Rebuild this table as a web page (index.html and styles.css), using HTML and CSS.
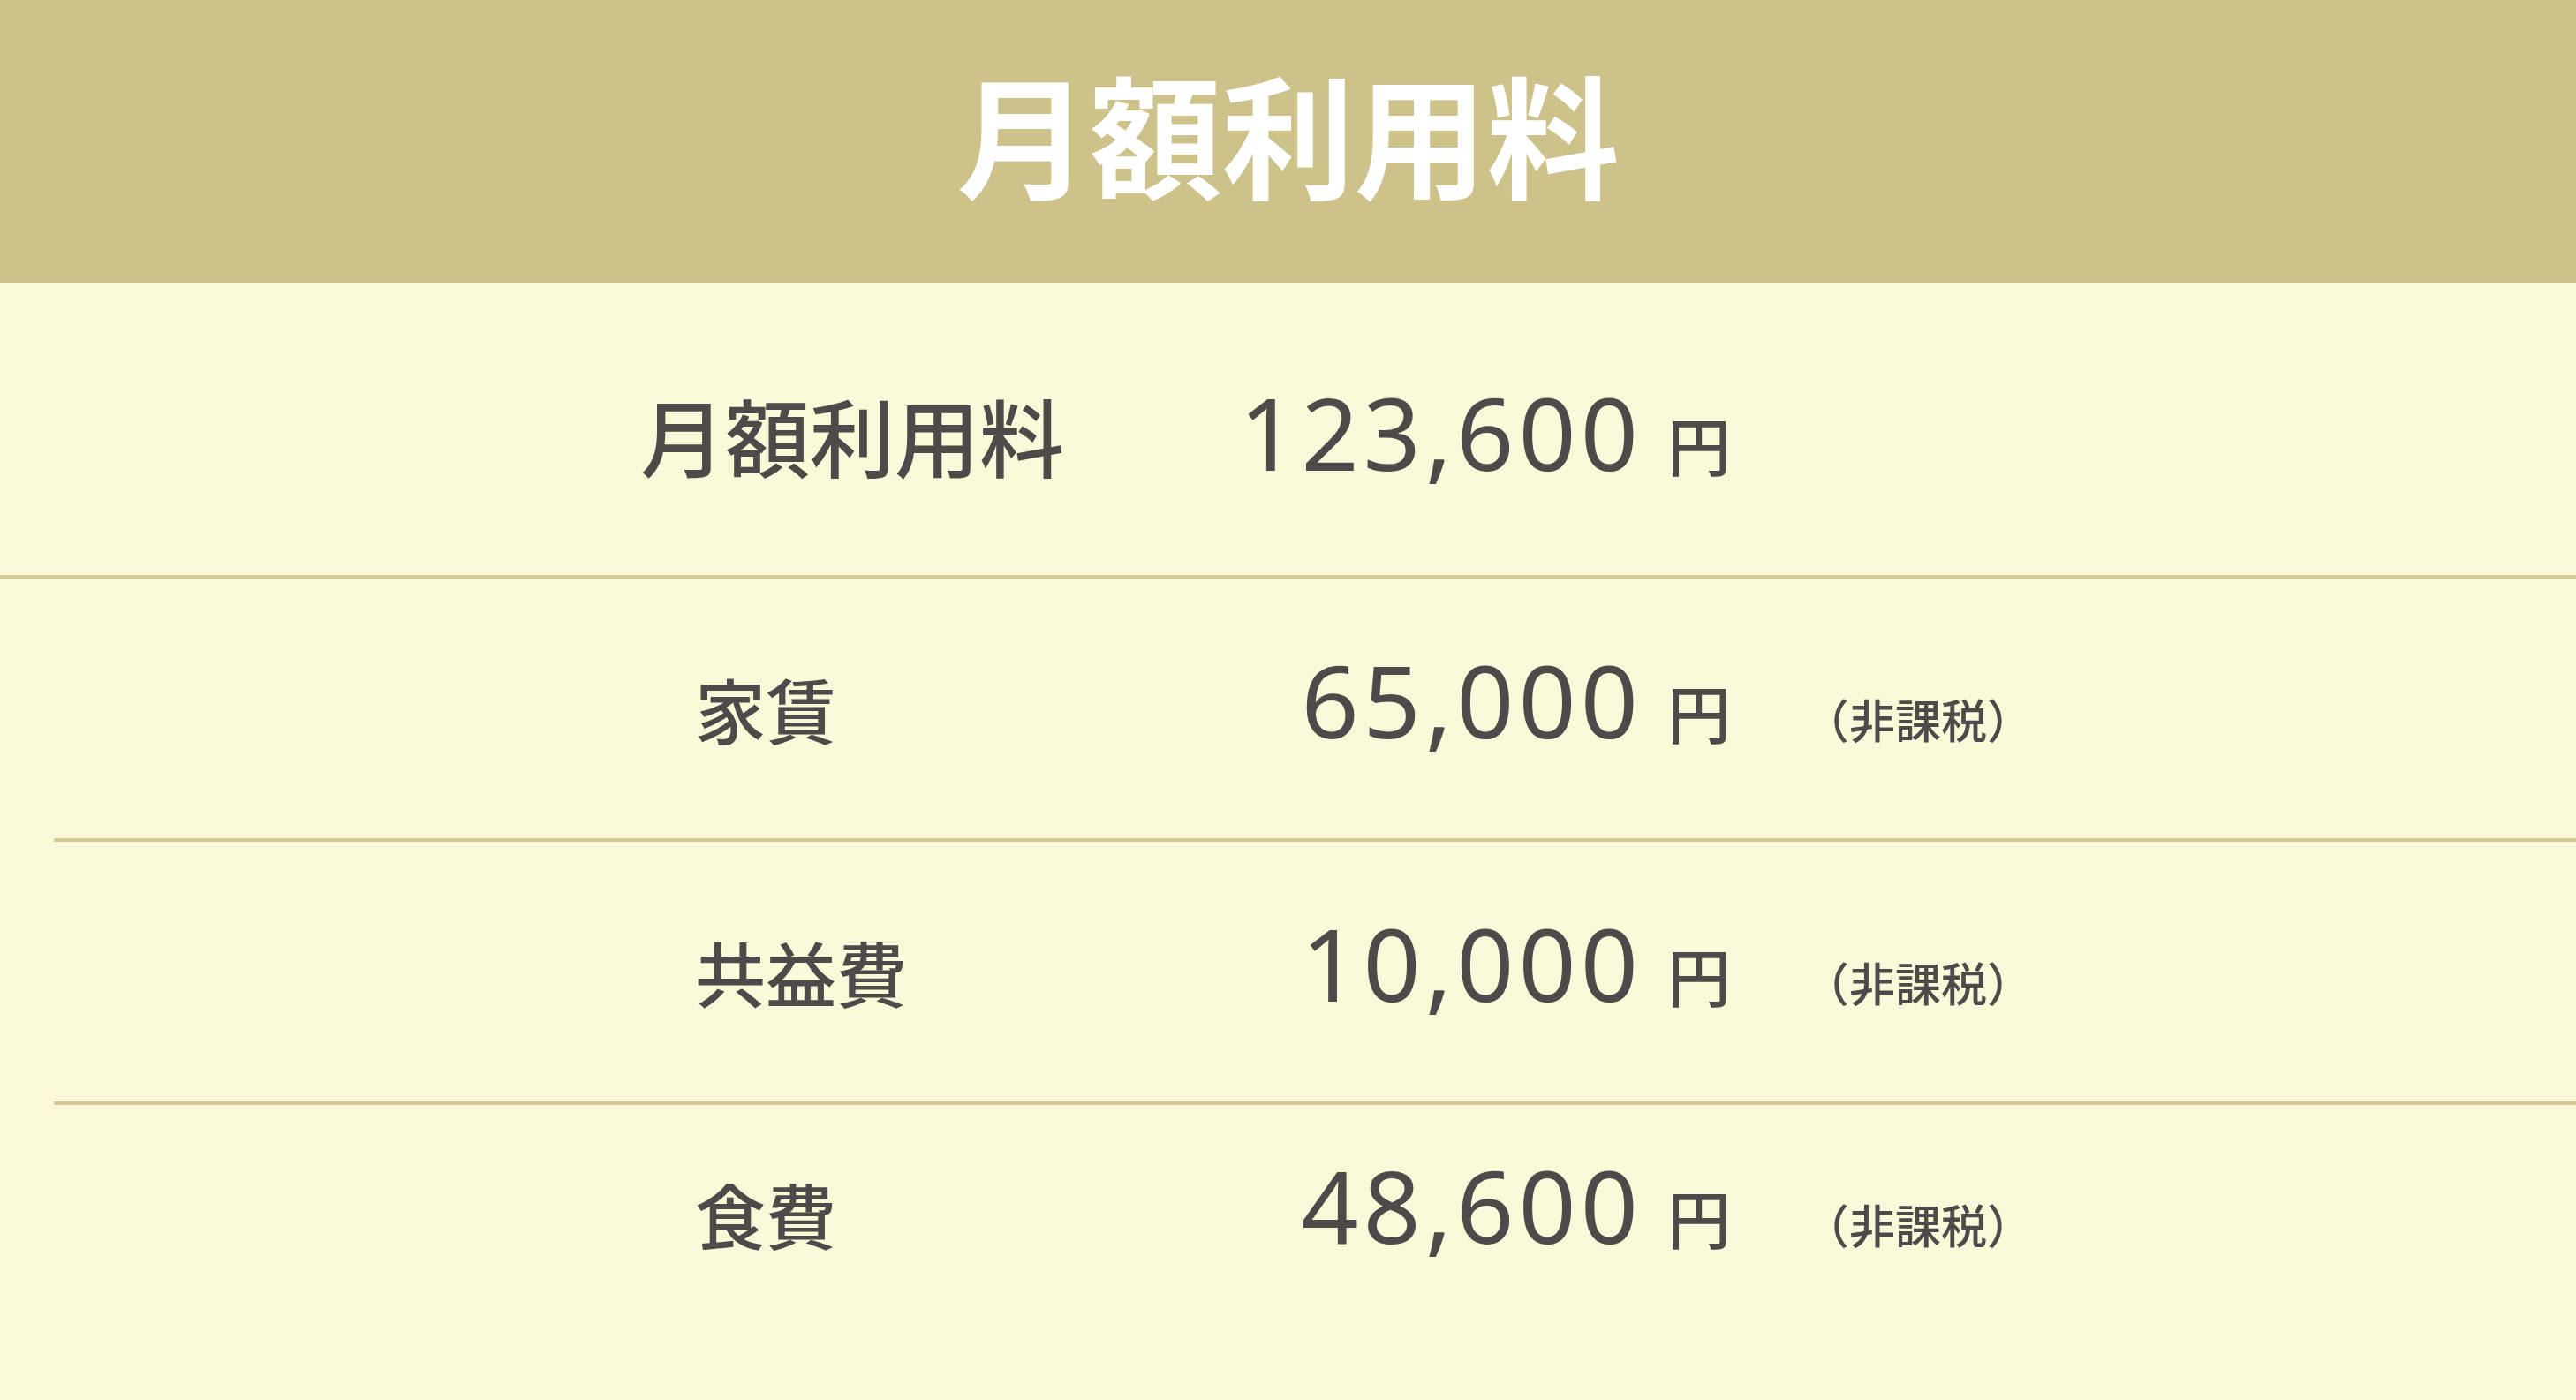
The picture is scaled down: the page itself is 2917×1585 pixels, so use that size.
FILE: index.html
```html
<!DOCTYPE html>
<html lang="ja">
<head>
<meta charset="utf-8">
<title>月額利用料</title>
<link rel="stylesheet" href="styles.css">
</head>
<body>
<header class="header">
  <h1 class="title">月額利用料</h1>
</header>
<main class="table">
  <div class="row row-total">
    <div class="label label-total">月額利用料</div>
    <div class="amount">123,600</div>
    <div class="yen">円</div>
  </div>
  <div class="row row-item row-first">
    <div class="label">家賃</div>
    <div class="amount">65,000</div>
    <div class="yen">円</div>
    <div class="note">（非課税）</div>
  </div>
  <div class="row row-item row-lined">
    <div class="label">共益費</div>
    <div class="amount">10,000</div>
    <div class="yen">円</div>
    <div class="note">（非課税）</div>
  </div>
  <div class="row row-item row-lined row-last">
    <div class="label">食費</div>
    <div class="amount">48,600</div>
    <div class="yen">円</div>
    <div class="note">（非課税）</div>
  </div>
</main>
</body>
</html>
```
FILE: styles.css
```css
* { box-sizing: border-box; }
html, body {
  margin: 0;
  padding: 0;
}
body {
  width: 2917px;
  height: 1585px;
  overflow: hidden;
  background: #f9f9d9;
  color: #4e4a49;
  font-family: "Noto Sans CJK JP", "Noto Sans", sans-serif;
}
.header {
  height: 320px;
  padding-bottom: 22px;
  background: #cdc28a;
  display: flex;
  align-items: center;
  justify-content: center;
}
.title {
  margin: 0;
  color: #ffffff;
  font-size: 150px;
  font-weight: 700;
  line-height: 1;
  font-family: "Noto Sans CJK JP", sans-serif;
}
.table {
  display: flex;
  flex-direction: column;
}
.row {
  display: flex;
  align-items: baseline;
}
.row-total {
  height: 335px;
  padding-top: 112px;
  padding-left: 725px;
  border-bottom: 4px solid #d5c892;
}
.row-item {
  margin-left: 61px;
  padding-left: 726px;
  height: 294px;
  padding-top: 80px;
}
.row-lined {
  border-top: 4px solid #d5c892;
  height: 298px;
}
.row-last {
  padding-top: 56px;
  height: 334px;
}
.label {
  font-family: "Noto Sans CJK JP", sans-serif;
  font-size: 80px;
  font-weight: 500;
  line-height: 1;
  width: 513px;
}
.label-total {
  font-size: 96px;
  width: 575px;
}
.amount {
  font-family: "Noto Sans", "Open Sans", sans-serif;
  font-size: 114px;
  font-weight: 400;
  letter-spacing: 5px;
  line-height: 1;
  width: 560px;
  text-align: right;
}
.yen {
  font-family: "Noto Sans CJK JP", sans-serif;
  font-size: 72px;
  font-weight: 500;
  line-height: 1;
  margin-left: 28px;
  width: 72px;
}
.note {
  font-family: "Noto Sans CJK JP", sans-serif;
  font-size: 52px;
  font-weight: 500;
  line-height: 1;
  margin-left: 82px;
  white-space: nowrap;
}
```
